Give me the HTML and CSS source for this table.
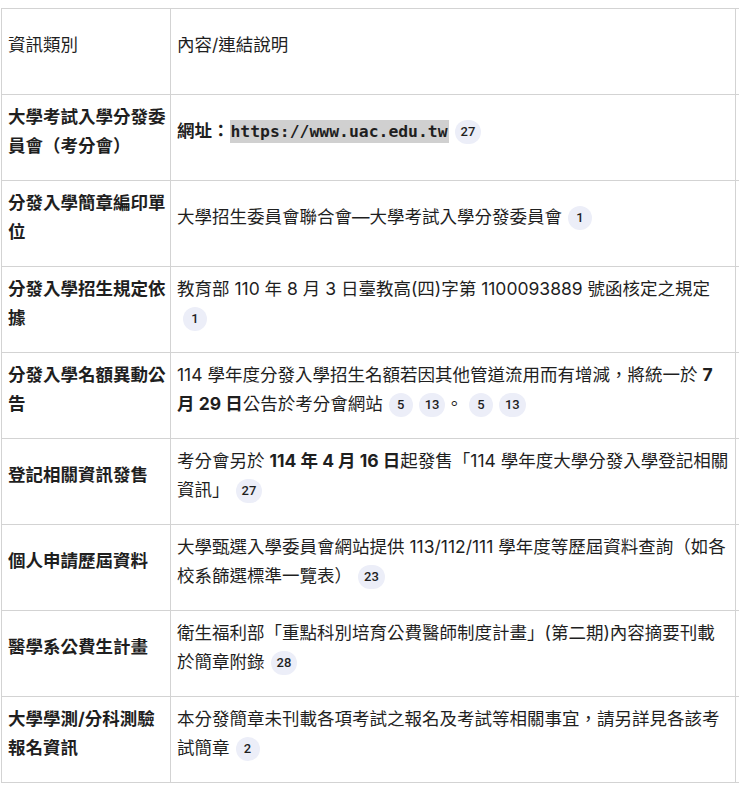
FILE: index.html
```html
<!DOCTYPE html>
<html lang="zh-Hant">
<head>
<meta charset="utf-8">
<title>分發入學資訊</title>
<link rel="stylesheet" href="styles.css">
</head>
<body>
<div class="wrap">
<table class="info">
  <colgroup><col class="c1"><col class="c2"><col class="c3"></colgroup>
  <tr>
    <td class="lead">資訊類別</td>
    <td>內容/連結說明</td>
    <td></td>
  </tr>
  <tr>
    <th>大學考試入學分發委員會（考分會）</th>
    <td><b>網址：</b><code>https://www.uac.edu.tw</code><span class="badge">27</span></td>
    <td></td>
  </tr>
  <tr>
    <th>分發入學簡章編印單位</th>
    <td>大學招生委員會聯合會—大學考試入學分發委員會<span class="badge">1</span></td>
    <td></td>
  </tr>
  <tr>
    <th>分發入學招生規定依據</th>
    <td>教育部 110 年 8 月 3 日臺教高(四)字第 1100093889 號函核定之規定 <span class="badge">1</span></td>
    <td></td>
  </tr>
  <tr>
    <th>分發入學名額異動公告</th>
    <td>114 學年度分發入學招生名額若因其他管道流用而有增減，將統一於 <b>7 月 29 日</b>公告於考分會網站<span class="badge">5</span><span class="badge">13</span>。<span class="badge">5</span><span class="badge">13</span></td>
    <td></td>
  </tr>
  <tr>
    <th>登記相關資訊發售</th>
    <td>考分會另於 <b>114 年 4 月 16 日</b>起發售「114 學年度大學分發入學登記相關資訊」<span class="badge">27</span></td>
    <td></td>
  </tr>
  <tr>
    <th>個人申請歷屆資料</th>
    <td>大學甄選入學委員會網站提供 113/112/111 學年度等歷屆資料查詢（如各校系篩選標準一覽表）<span class="badge">23</span></td>
    <td></td>
  </tr>
  <tr>
    <th>醫學系公費生計畫</th>
    <td>衛生福利部「重點科別培育公費醫師制度計畫」(第二期)內容摘要刊載於簡章附錄<span class="badge">28</span></td>
    <td></td>
  </tr>
  <tr>
    <th>大學學測/分科測驗報名資訊</th>
    <td>本分發簡章未刊載各項考試之報名及考試等相關事宜，請另詳見各該考試簡章<span class="badge">2</span></td>
    <td></td>
  </tr>
</table>
</div>
</body>
</html>
```
FILE: styles.css
```css
html, body {
  margin: 0;
  padding: 0;
  background: #ffffff;
  overflow: hidden;
}
.wrap {
  padding: 8px 0 0 1px;
  width: 738px;
  overflow: hidden;
}
.info {
  border-collapse: collapse;
  table-layout: fixed;
  width: 770px;
  font-family: Inter, "Noto Sans CJK TC", sans-serif;
  font-size: 17.5px;
  line-height: 29px;
  color: #1f1f1f;
}
.c1 { width: 169px; }
.c2 { width: 565px; }
.c3 { width: 36px; }
.info tr { height: 86px; }
.info td, .info th {
  border: 1px solid #d3d3d3;
  padding: 6px 6px 20px 6px;
  vertical-align: middle;
  text-align: left;
  font-weight: 400;
}
.info th, .info .lead {
  padding-right: 4px;
}
.info th {
  font-weight: 700;
}
.info b {
  font-weight: 700;
}
.info code {
  font-family: "DejaVu Sans Mono", monospace;
  font-weight: 700;
  font-size: 16.4px;
  background: #d0d0d0;
  padding: 2px 1px;
}
.badge {
  display: inline-flex;
  align-items: center;
  justify-content: center;
  min-width: 24px;
  height: 24px;
  padding: 0 6px;
  box-sizing: border-box;
  margin-left: 6px;
  border-radius: 12px;
  background: #eceef8;
  font-family: Roboto, sans-serif;
  font-size: 13px;
  font-weight: 500;
  line-height: 24px;
  color: #1f1f1f;
  vertical-align: middle;
}
```
